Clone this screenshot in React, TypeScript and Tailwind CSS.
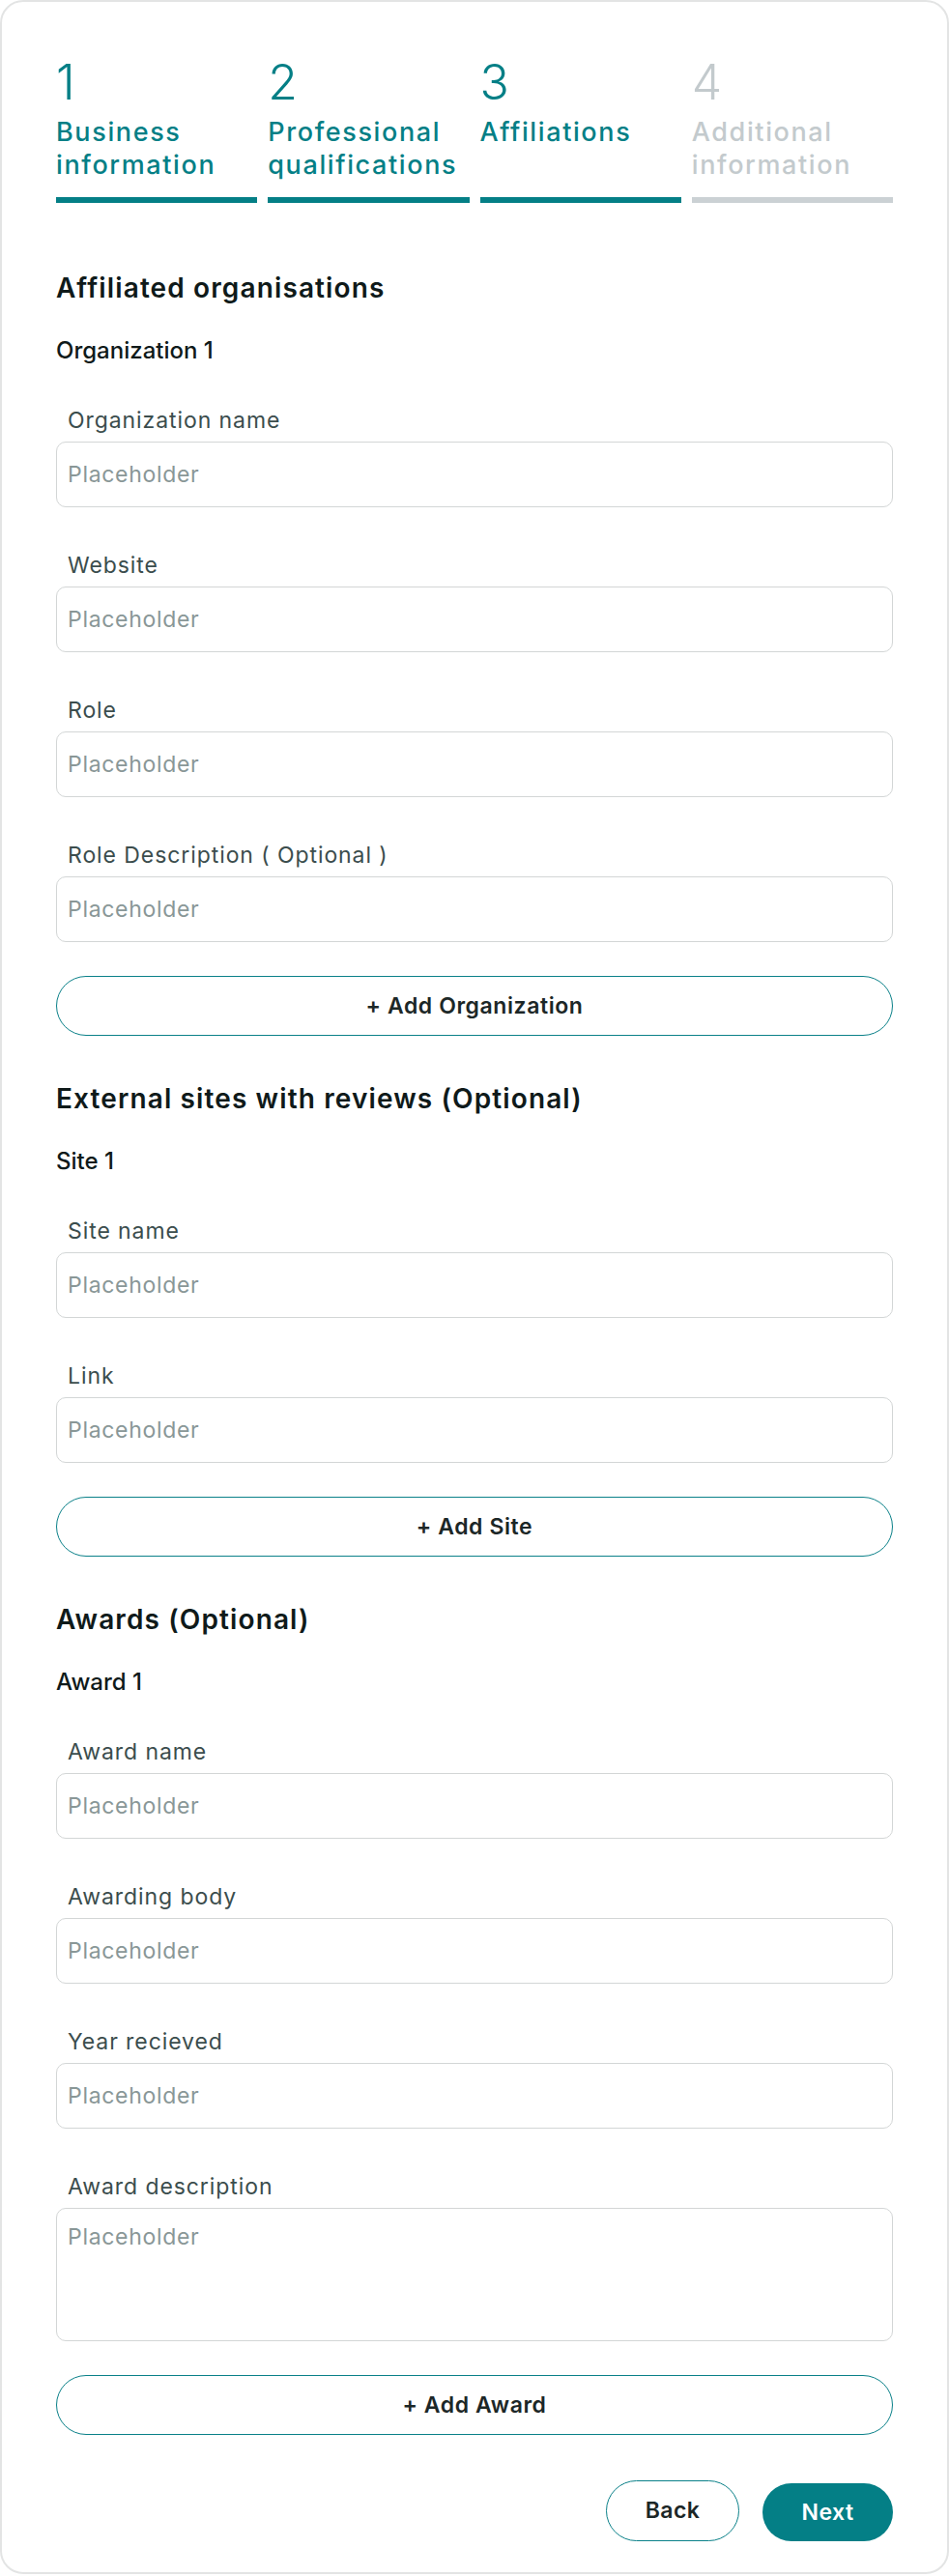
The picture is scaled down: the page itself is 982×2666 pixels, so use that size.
import React from "react";

type Step = { n: string; lines: string[]; done: boolean };

const steps: Step[] = [
  { n: "1", lines: ["Business", "information"], done: true },
  { n: "2", lines: ["Professional", "qualifications"], done: true },
  { n: "3", lines: ["Affiliations"], done: true },
  { n: "4", lines: ["Additional", "information"], done: false },
];

function Field({ label, first = false, tall = false }: { label: string; first?: boolean; tall?: boolean }) {
  return (
    <div className={first ? "mt-[41px]" : "mt-[45px]"}>
      <label className="block pl-3 text-[23px] leading-[30px] tracking-[0.04em] text-[#3b4d4d]">{label}</label>
      {tall ? (
        <textarea
          placeholder="Placeholder"
          className="mt-[7px] block h-[138px] w-full resize-none rounded-[10px] border border-[#d3d6d6] bg-white px-[11px] pt-[14px] text-[23px] leading-[30px] tracking-[0.03em] text-[#1b2626] outline-none placeholder:text-[#899797]"
        />
      ) : (
        <input
          placeholder="Placeholder"
          className="mt-[7px] block h-[68px] w-full rounded-[10px] border border-[#d3d6d6] bg-white px-[11px] text-[23px] tracking-[0.03em] text-[#1b2626] outline-none placeholder:text-[#899797]"
        />
      )}
    </div>
  );
}

function AddButton({ text }: { text: string }) {
  return (
    <button className="mt-[35px] flex h-[62px] w-full items-center justify-center rounded-full border-[1.5px] border-[#0b8189] bg-white text-[23px] font-semibold tracking-[0.025em] text-[#1c2727]">
      {text}
    </button>
  );
}

function Section({
  title,
  sub,
  fields,
  button,
  first = false,
}: {
  title: string;
  sub: string;
  fields: { label: string; tall?: boolean }[];
  button: string;
  first?: boolean;
}) {
  return (
    <section className={first ? "mt-[70px]" : "mt-[47px]"}>
      <h2 className="text-[28px] font-semibold leading-[36px] tracking-[0.04em] text-[#0f1a1a]">{title}</h2>
      <h3 className="mt-[31px] text-[24px] font-medium leading-[32px] text-[#0f1a1a]">{sub}</h3>
      {fields.map((f, i) => (
        <Field key={f.label} label={f.label} first={i === 0} tall={f.tall} />
      ))}
      <AddButton text={button} />
    </section>
  );
}

export default function App() {
  return (
    <div className="min-h-[2666px] bg-white font-['Inter',sans-serif]">
      <div className="rounded-[24px] border-2 border-[#e3e4e4] bg-white px-[56px] pb-[32px] pt-[58px]">
        {/* progress header */}
        <div className="grid grid-cols-4 gap-[11px]">
          {steps.map((s) => {
            const color = s.done ? "text-[#047f86]" : "text-[#c3cacd]";
            return (
              <div key={s.n} className="flex flex-col">
                <div className={`text-[50px] font-light leading-[50px] ${color}`}>{s.n}</div>
                <div className={`mt-[10px] h-[68px] whitespace-nowrap text-[27px] font-medium leading-[34px] tracking-[0.06em] ${color}`}>
                  {s.lines.map((l) => (
                    <div key={l}>{l}</div>
                  ))}
                </div>
                <div className={`mt-[16px] h-[6px] ${s.done ? "bg-[#047f86]" : "bg-[#cbd1d4]"}`} />
              </div>
            );
          })}
        </div>

        <Section
          first
          title="Affiliated organisations"
          sub="Organization 1"
          fields={[
            { label: "Organization name" },
            { label: "Website" },
            { label: "Role" },
            { label: "Role Description ( Optional )" },
          ]}
          button="+ Add Organization"
        />

        <Section
          title="External sites with reviews (Optional)"
          sub="Site 1"
          fields={[{ label: "Site name" }, { label: "Link" }]}
          button="+ Add Site"
        />

        <Section
          title="Awards (Optional)"
          sub="Award 1"
          fields={[
            { label: "Award name" },
            { label: "Awarding body" },
            { label: "Year recieved" },
            { label: "Award description", tall: true },
          ]}
          button="+ Add Award"
        />

        <div className="mt-[47px] flex items-end justify-end gap-[24px]">
          <button className="h-[63px] w-[138px] rounded-full border-[1.5px] border-[#0b8189] bg-white text-[23px] font-semibold tracking-[0.02em] text-[#1c2727]">
            Back
          </button>
          <button className="h-[60px] w-[135px] rounded-full bg-[#047f86] text-[23px] font-semibold tracking-[0.02em] text-white">
            Next
          </button>
        </div>
      </div>
    </div>
  );
}
